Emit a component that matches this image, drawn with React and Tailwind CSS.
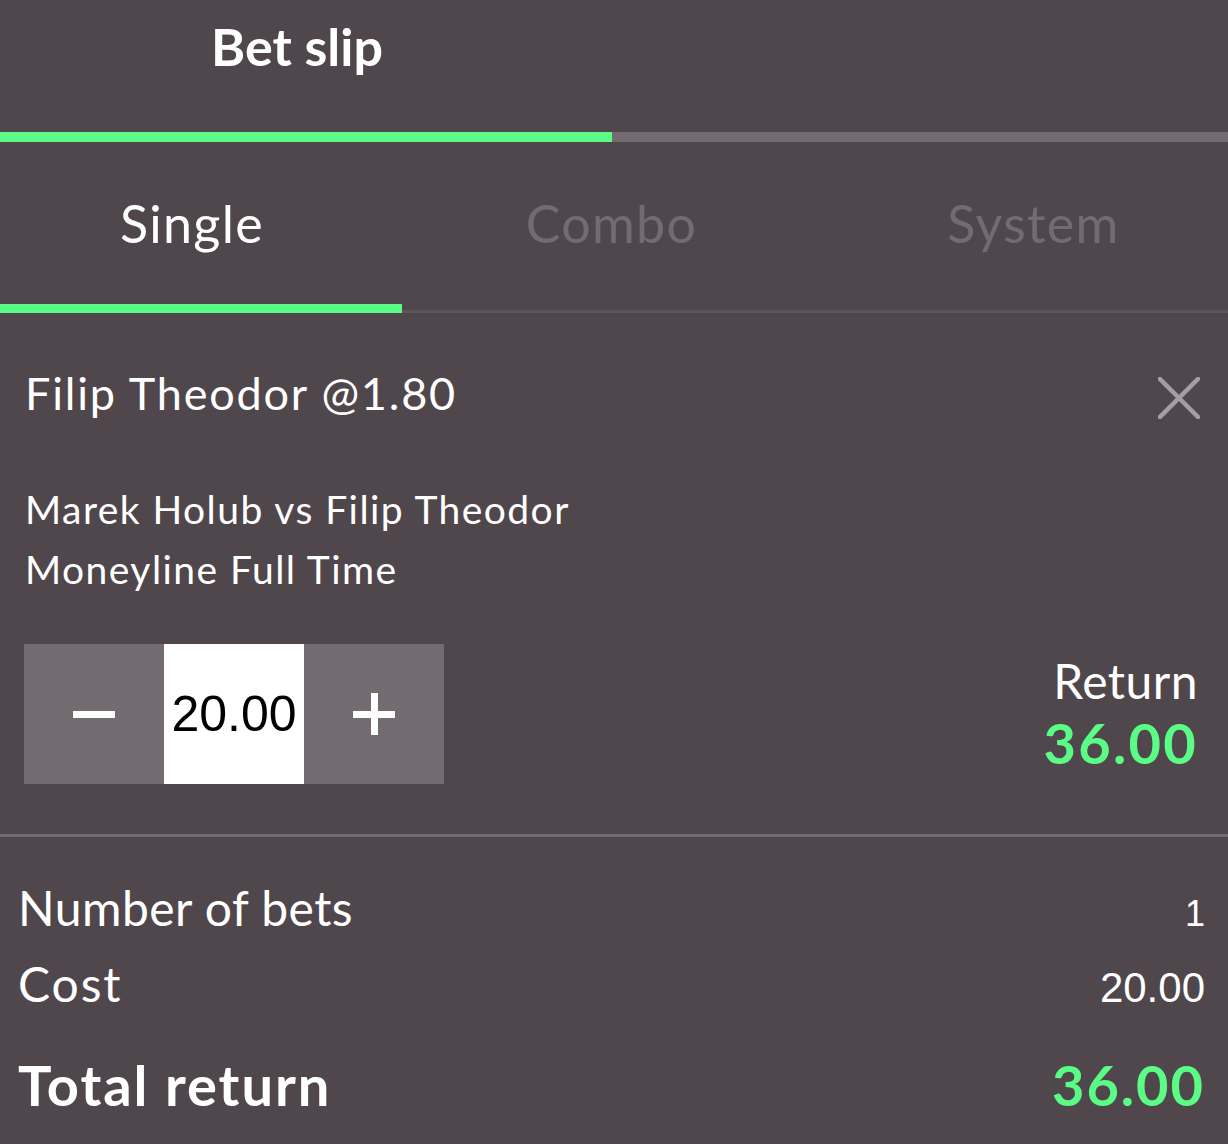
import { useState } from "react";

const tabs = ["Single", "Combo", "System"];

const CloseIcon = () => (
  <svg width="42" height="42" viewBox="0 0 42 42" fill="none">
    <path d="M2 2L40 40M40 2L2 40" stroke="#a39ea1" strokeWidth="4.5" strokeLinecap="square" />
  </svg>
);

const SummaryRow = ({ label, value, className, labelClass, valueClass }) => (
  <div className={`flex items-baseline justify-between ${className}`}>
    <span className={labelClass}>{label}</span>
    <span className={valueClass}>{value}</span>
  </div>
);

const App = () => {
  const [activeTab, setActiveTab] = useState(0);
  const [stake, setStake] = useState(20);
  const odds = 1.8;
  const ret = (stake * odds).toFixed(2);

  return (
    <div className="min-h-screen w-full bg-[#50474c] text-white font-['Lato','Noto_Sans',sans-serif]">
      {/* header */}
      <div className="h-[132px] w-[594px] pt-[20px] text-center">
        <span className="text-[52px] font-bold leading-none">Bet slip</span>
      </div>
      <div className="flex h-[10px]">
        <div className="w-[612px] bg-[#5afc86]"></div>
        <div className="flex-1 bg-[#736b70]"></div>
      </div>

      {/* bet type tabs */}
      <div className="grid h-[162px] grid-cols-[384px_455px_1fr] items-center">
        {tabs.map((tab, i) => (
          <button
            key={tab}
            onClick={() => setActiveTab(i)}
            className={`text-[52px] leading-none tracking-[0.025em] ${
              i === activeTab ? "text-white" : "text-[#736b70]"
            }`}
          >
            {tab}
          </button>
        ))}
      </div>
      <div className="flex h-[9px] items-end">
        <div className="h-full w-[402px] bg-[#5afc86]"></div>
        <div className="h-[3px] flex-1 bg-[#5e555a]"></div>
      </div>

      {/* selection */}
      <div className="border-b-[3px] border-[#736b70] pb-[50px] pl-[25px] pr-[28px] pt-[58px]">
        <div className="flex items-start justify-between">
          <span className="text-[45px] leading-none tracking-[0.04em]">Filip Theodor @1.80</span>
          <button className="mt-[6px]">
            <CloseIcon />
          </button>
        </div>
        <div className="mt-[60px] text-[39px] leading-[60px] tracking-[0.037em]">
          <div>Marek Holub vs Filip Theodor</div>
          <div>Moneyline Full Time</div>
        </div>
        <div className="mt-[45px] flex items-center justify-between">
          <div className="-ml-[1px] flex h-[140px]">
            <button
              onClick={() => setStake(Math.max(0, stake - 1))}
              className="flex w-[140px] items-center justify-center bg-[#736b70]"
            >
              <span className="block h-[7px] w-[42px] bg-white"></span>
            </button>
            <div className="flex w-[140px] items-center justify-center bg-white font-['Liberation_Sans',Arial,sans-serif] text-[50px] leading-none text-black">
              {stake.toFixed(2)}
            </div>
            <button
              onClick={() => setStake(stake + 1)}
              className="relative flex w-[140px] items-center justify-center bg-[#736b70]"
            >
              <span className="block h-[7px] w-[42px] bg-white"></span>
              <span className="absolute h-[42px] w-[7px] bg-white"></span>
            </button>
          </div>
          <div className="flex flex-col items-end pr-[2px]">
            <span className="text-[48px] leading-none tracking-[0.01em]">Return</span>
            <span className="mt-[10px] text-[56px] font-bold leading-none tracking-[0.04em] text-[#5afc86]">
              {ret}
            </span>
          </div>
        </div>
      </div>

      {/* summary */}
      <div className="pl-[18px] pr-[23px] pt-[47px]">
        <SummaryRow
          label="Number of bets"
          value="1"
          labelClass="text-[48px] leading-none tracking-[0.01em]"
          valueClass="font-['Liberation_Sans',Arial,sans-serif] text-[36px] leading-none"
        />
        <SummaryRow
          className="mt-[28px]"
          label="Cost"
          value={stake.toFixed(2)}
          labelClass="text-[48px] leading-none tracking-[0.04em]"
          valueClass="font-['Liberation_Sans',Arial,sans-serif] text-[42px] leading-none"
        />
        <SummaryRow
          className="mt-[48px]"
          label="Total return"
          value={ret}
          labelClass="text-[56px] font-bold leading-none tracking-[0.035em]"
          valueClass="text-[56px] font-bold leading-none tracking-[0.035em] text-[#5afc86]"
        />
      </div>
    </div>
  );
};

export default App;
